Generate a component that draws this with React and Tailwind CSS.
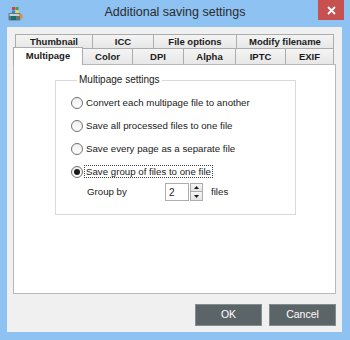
import React from "react";

function AppIcon() {
  return (
    <svg width="16" height="16" viewBox="0 0 16 16">
      <rect x="5" y="1" width="3" height="3" fill="#e53935" />
      <rect x="8.5" y="1" width="3" height="3" fill="#43a047" />
      <rect x="5" y="4.5" width="3" height="3" fill="#1e88e5" />
      <rect x="8.5" y="4.5" width="3" height="3" fill="#fdd835" />
      <rect x="1.5" y="7" width="12" height="7.5" rx="1" fill="#6b7478" />
      <rect x="2.5" y="8" width="10" height="2" fill="#c9d0d3" />
      <rect x="4" y="10" width="5" height="4" fill="#14706a" />
      <rect x="13" y="8.5" width="2.5" height="4" fill="#f08a24" />
    </svg>
  );
}

function Radio({ checked, children }) {
  return (
    <div className="h-[23px] flex items-center">
      <div className="w-[12px] h-[12px] rounded-full border border-[#707070] bg-linear-to-b from-[#eeeeee] to-[#ffffff] flex items-center justify-center shrink-0">
        {checked && <div className="w-[6px] h-[6px] rounded-full bg-[#1c1c1c]" />}
      </div>
      <span
        className={
          checked
            ? "ml-[1px] px-[1px] border border-dotted border-[#404040] leading-[11px] text-[9.7px] text-[#1a1a1a]"
            : "ml-[1px] px-[1px] border border-transparent leading-[11px] text-[9.7px] text-[#1a1a1a]"
        }
      >
        {children}
      </span>
    </div>
  );
}

export default function App() {
  const backTab =
    "h-[14px] border-t border-l border-[#acacac] bg-linear-to-b from-[#f4f4f4] to-[#e7e7e7] text-[9.5px] font-bold text-[#1a1a1a] flex items-center justify-center leading-[12px] pt-[1px]";
  const frontTab =
    "h-[16px] border-t border-r border-[#acacac] bg-linear-to-b from-[#f4f4f4] to-[#e7e7e7] text-[9.5px] font-bold text-[#1a1a1a] flex items-center justify-center leading-[12px]";
  return (
    <div className="w-[350px] h-[340px] bg-[#8dc2f3] flex flex-col font-['Liberation_Sans',Arial,sans-serif] overflow-hidden">
      {/* Title bar */}
      <div className="h-[27px] grid grid-cols-[1fr_auto_1fr] items-center shrink-0">
        <div className="pl-[7px] flex items-center">
          <AppIcon />
        </div>
        <div className="text-[12.5px] leading-[15px] text-[#2b2b2b] pb-[2px]">
          Additional saving settings
        </div>
        <div className="self-start flex justify-end pr-[6px]">
          <div className="w-[26px] h-[20px] bg-[#c75050] flex items-center justify-center">
            <svg width="9" height="9" viewBox="0 0 9 9">
              <path d="M1 1 L8 8 M8 1 L1 8" stroke="#ffffff" strokeWidth="1.8" />
            </svg>
          </div>
        </div>
      </div>

      {/* Client area */}
      <div className="ml-[7px] mr-[8px] h-[305px] bg-[#f0f0f0] flex flex-col px-[6px] pt-[7px] pb-[7px] shrink-0">
        {/* Tabs back row */}
        <div className="flex ml-[2px]">
          <div className={backTab + " w-[77px]"}>Thumbnail</div>
          <div className={backTab + " w-[61px]"}>ICC</div>
          <div className={backTab + " w-[83px]"}>File options</div>
          <div className={backTab + " w-[98px] border-r"}>Modify filename</div>
        </div>
        {/* Tabs front row */}
        <div className="flex items-end h-[16px]">
          <div className="relative z-10 w-[70px] h-[18px] -mb-px border-t border-l border-r border-[#acacac] bg-white text-[9.5px] font-bold text-[#1a1a1a] flex items-center justify-center leading-[12px] pb-[2px]">
            Multipage
          </div>
          <div className={frontTab + " w-[50px]"}>Color</div>
          <div className={frontTab + " w-[51px]"}>DPI</div>
          <div className={frontTab + " w-[52px]"}>Alpha</div>
          <div className={frontTab + " w-[50px]"}>IPTC</div>
          <div className={frontTab + " w-[48px]"}>EXIF</div>
        </div>

        {/* Panel */}
        <div className="h-[230px] bg-white border border-[#b9b9b9] shrink-0">
          <fieldset className="ml-[41px] mt-[9px] w-[241px] h-[141px] border border-[#d9d9d9] pl-[15px] pt-[5px]">
            <legend className="ml-[6px] px-[2px] text-[10px] leading-[12px] text-[#1a1a1a]">
              Multipage settings
            </legend>
            <Radio>Convert each multipage file to another</Radio>
            <Radio>Save all processed files to one file</Radio>
            <Radio>Save every page as a separate file</Radio>
            <Radio checked>Save group of files to one file</Radio>
            <div className="flex items-center h-[18px]">
              <span className="ml-[16px] w-[78px] text-[9.7px] text-[#1a1a1a]">Group by</span>
              <div className="w-[24px] h-[18px] border border-[#abadb3] bg-white flex items-center pl-[3px] text-[10px] text-[#1a1a1a]">
                2
              </div>
              <div className="ml-[1px] w-[13px] h-[18px] flex flex-col">
                <div className="h-[9px] border border-[#acacac] bg-linear-to-b from-[#f6f6f6] to-[#e4e4e4] flex items-center justify-center">
                  <svg width="5" height="3" viewBox="0 0 5 3">
                    <path d="M0 3 L2.5 0 L5 3 Z" fill="#1a1a1a" />
                  </svg>
                </div>
                <div className="h-[9px] border border-t-0 border-[#acacac] bg-linear-to-b from-[#f6f6f6] to-[#e4e4e4] flex items-center justify-center">
                  <svg width="5" height="3" viewBox="0 0 5 3">
                    <path d="M0 0 L2.5 3 L5 0 Z" fill="#1a1a1a" />
                  </svg>
                </div>
              </div>
              <span className="ml-[8px] text-[9.7px] text-[#1a1a1a]">files</span>
            </div>
          </fieldset>
        </div>

        {/* Buttons */}
        <div className="mt-[10px] flex justify-end gap-[7px]">
          <div className="w-[67px] h-[22px] bg-[#5b6467] border border-[#858c8f] text-white text-[10.5px] flex items-center justify-center">
            OK
          </div>
          <div className="w-[67px] h-[22px] bg-[#5b6467] border border-[#858c8f] text-white text-[10.5px] flex items-center justify-center">
            Cancel
          </div>
        </div>
      </div>
    </div>
  );
}
